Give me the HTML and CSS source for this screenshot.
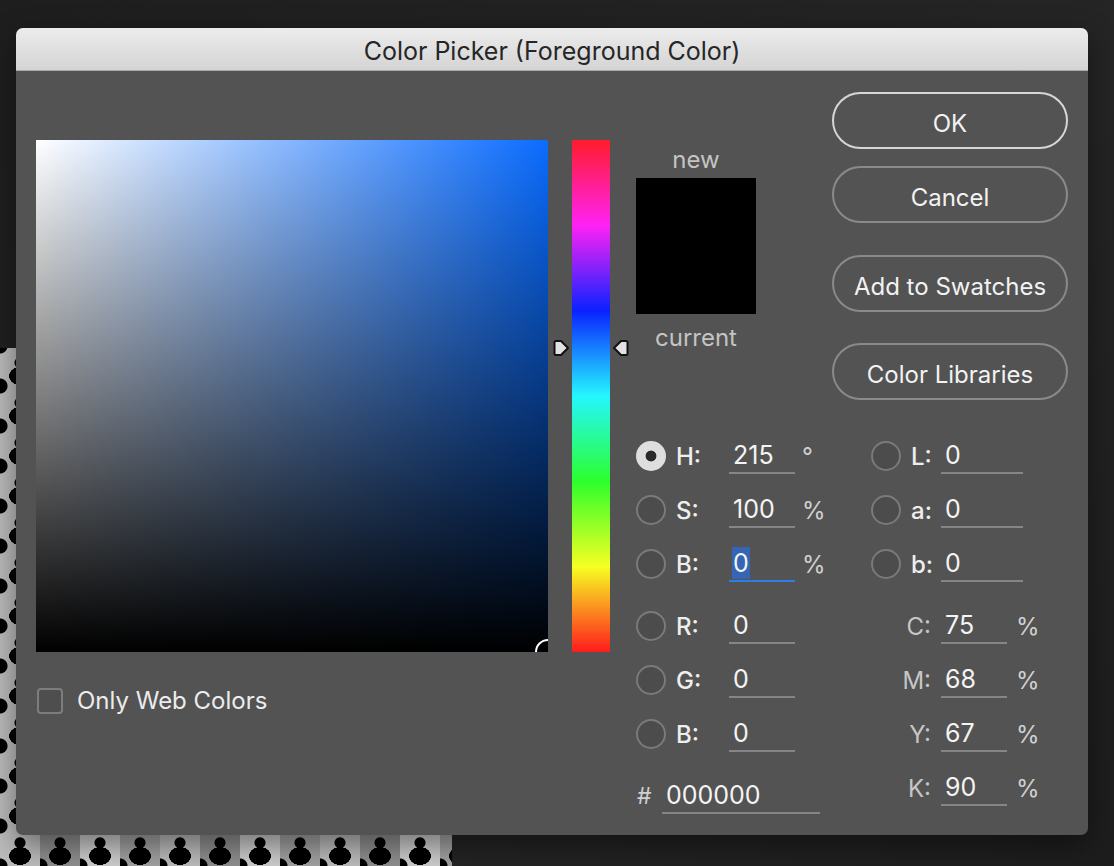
FILE: index.html
```html
<!DOCTYPE html>
<html>
<head>
<meta charset="utf-8">
<title>Color Picker</title>
<link rel="stylesheet" href="styles.css">
</head>
<body>
<div class="desktop-pattern"></div>
<div class="window">
  <div class="titlebar">Color Picker (Foreground Color)</div>
  <div class="content">
    <div class="col-field">
      <div class="field"><span class="field-ring"></span></div>
      <div class="webonly"><span class="checkbox"></span><span>Only Web Colors</span></div>
    </div>
    <div class="hue">
      <div class="hue-bar"></div>
      <svg class="arrow arrow-left" width="18" height="18" viewBox="0 0 18 18"><path d="M2.5 3.5 Q2.5 2 4 2 L9 2 L16 9 L9 16 L4 16 Q2.5 16 2.5 14.5 Z" fill="#e2e2e2" stroke="#111" stroke-width="2" stroke-linejoin="round"/></svg>
      <svg class="arrow arrow-right" width="18" height="18" viewBox="0 0 18 18"><path d="M15.5 3.5 Q15.5 2 14 2 L9 2 L2 9 L9 16 L14 16 Q15.5 16 15.5 14.5 Z" fill="#e2e2e2" stroke="#111" stroke-width="2" stroke-linejoin="round"/></svg>
    </div>
    <div class="right">
      <div class="top">
        <div class="preview">
          <div class="plabel">new</div>
          <div class="swatch"></div>
          <div class="plabel current">current</div>
        </div>
        <div class="buttons">
          <div class="btn btn-ok">OK</div>
          <div class="btn btn-cancel">Cancel</div>
          <div class="btn btn-add">Add to Swatches</div>
          <div class="btn btn-lib">Color Libraries</div>
        </div>
      </div>
      <div class="fields">
        <div class="fcol fcol-left">
          <div class="row"><span class="radio on"></span><span class="lbl">H:</span><span class="inp">215</span><span class="unit">°</span></div>
          <div class="row"><span class="radio"></span><span class="lbl">S:</span><span class="inp">100</span><span class="unit">%</span></div>
          <div class="row"><span class="radio"></span><span class="lbl">B:</span><span class="inp active"><span class="sel">0</span></span><span class="unit">%</span></div>
          <div class="row gap"><span class="radio"></span><span class="lbl">R:</span><span class="inp">0</span></div>
          <div class="row"><span class="radio"></span><span class="lbl">G:</span><span class="inp">0</span></div>
          <div class="row"><span class="radio"></span><span class="lbl">B:</span><span class="inp">0</span></div>
          <div class="row gap"><span class="hash">#</span><span class="inp hex">000000</span></div>
        </div>
        <div class="fcol fcol-right">
          <div class="row"><span class="radio"></span><span class="lbl2">L:</span><span class="inp wide">0</span></div>
          <div class="row"><span class="radio"></span><span class="lbl2">a:</span><span class="inp wide">0</span></div>
          <div class="row"><span class="radio"></span><span class="lbl2">b:</span><span class="inp wide">0</span></div>
          <div class="row gap"><span class="lbl3">C:</span><span class="inp">75</span><span class="unit u2">%</span></div>
          <div class="row"><span class="lbl3">M:</span><span class="inp">68</span><span class="unit u2">%</span></div>
          <div class="row"><span class="lbl3">Y:</span><span class="inp">67</span><span class="unit u2">%</span></div>
          <div class="row"><span class="lbl3">K:</span><span class="inp">90</span><span class="unit u2">%</span></div>
        </div>
      </div>
    </div>
  </div>
</div>
</body>
</html>
```

FILE: styles.css
```css
html, body {
  margin: 0;
  padding: 0;
}
body {
  width: 1114px;
  height: 866px;
  overflow: hidden;
  position: relative;
  background: linear-gradient(135deg, #1e1e1e 0%, #252525 60%, #1d1d1d 100%);
  font-family: "Inter", "Liberation Sans", sans-serif;
  padding: 28px 0 0 16px;
  box-sizing: border-box;
}
.desktop-pattern {
  position: absolute;
  left: 0;
  top: 348px;
  width: 452px;
  height: 518px;
  background-color: #a9a9a9;
  background-image:
    radial-gradient(ellipse 11px 9px at 50% 55%, #000 0 98%, transparent 100%),
    radial-gradient(circle at 50% 22%, #000 0 5px, transparent 6px),
    radial-gradient(circle at 0% 80%, #000 0 7px, transparent 8px),
    repeating-linear-gradient(90deg, #bcbcbc 0 40px, #8f8f8f 40px 80px, #cdcdcd 80px 120px, #a2a2a2 120px 160px),
    repeating-linear-gradient(180deg, rgba(255,255,255,0.15) 0 40px, rgba(0,0,0,0.12) 40px 80px);
  background-size: 40px 40px, 40px 40px, 40px 40px, auto, auto;
  background-position: 0 6px, 0 6px, 0 6px, 0 0, 0 0;
}
.window {
  position: relative;
  width: 1072px;
  height: 807px;
  background: #535353;
  border-radius: 7px;
  box-shadow: 0 10px 30px rgba(0,0,0,0.45);
  overflow: hidden;
}
.titlebar {
  height: 42px;
  border-bottom: 1px solid #a9a9a9;
  background: linear-gradient(#ececec, #d4d4d4);
  color: #262626;
  font-size: 25px;
  line-height: 46px;
  text-align: center;
}
.content {
  display: flex;
  padding: 0 0 0 20px;
}
.col-field {
  display: flex;
  flex-direction: column;
  margin-top: 69px;
}
.field {
  position: relative;
  width: 512px;
  height: 512px;
  overflow: hidden;
  background:
    linear-gradient(to top, #000, rgba(0,0,0,0)),
    linear-gradient(to right, #fff, #0a6cff);
}
.field-ring {
  position: absolute;
  right: -13px;
  bottom: -13px;
  width: 22px;
  height: 22px;
  border: 2px solid #fff;
  border-radius: 50%;
}
.webonly {
  display: flex;
  align-items: center;
  margin-top: 34px;
  margin-left: 1px;
  color: #ececec;
  font-size: 24px;
}
.checkbox {
  width: 22px;
  height: 22px;
  border: 2px solid #7d7d7d;
  border-radius: 4px;
  background: #4e4e4e;
  margin-right: 14px;
}
.hue {
  position: relative;
  margin-left: 24px;
  margin-top: 69px;
  width: 38px;
  height: 512px;
}
.hue-bar {
  width: 38px;
  height: 512px;
  background: linear-gradient(to bottom,
    #ff1c2a 0%, #ff22f4 16.67%, #0a22ff 33.33%, #25f6ff 50%, #2cff2c 66.67%, #f7ff22 83.33%, #ff1c1c 100%);
}
.arrow {
  position: absolute;
  top: 199px;
}
.arrow-left { left: -20px; }
.arrow-right { left: 40px; }
.right {
  margin-left: 26px;
  width: 432px;
  padding-top: 21px;
  display: flex;
  flex-direction: column;
}
.top {
  display: flex;
  justify-content: space-between;
}
.preview {
  width: 120px;
  margin-top: 54px;
  display: flex;
  flex-direction: column;
  align-items: center;
}
.plabel {
  color: #c4c4c4;
  font-size: 24px;
  line-height: 28px;
}
.swatch {
  width: 120px;
  height: 136px;
  background: #000;
  margin-top: 4px;
}
.plabel.current {
  margin-top: 10px;
}
.buttons {
  width: 236px;
  display: flex;
  flex-direction: column;
}
.btn {
  height: 47px;
  padding-top: 6px;
  border: 2px solid #8a8a8a;
  border-radius: 30px;
  color: #f2f2f2;
  font-size: 24px;
  line-height: 48px;
  text-align: center;
}
.btn-ok { border-color: #d6d6d6; }
.btn-cancel { margin-top: 17px; }
.btn-add { margin-top: 32px; }
.btn-lib { margin-top: 31px; }
.fields {
  display: flex;
  margin-top: 29px;
}
.fcol {
  display: flex;
  flex-direction: column;
}
.fcol-left { width: 235px; }
.row {
  height: 54px;
  display: flex;
  align-items: center;
}
.row.gap { margin-top: 8px; }
.radio {
  width: 26px;
  height: 26px;
  border: 2px solid #7a7a7a;
  border-radius: 50%;
  background: #4c4c4c;
  margin-right: 10px;
  box-sizing: content-box;
  flex: none;
}
.radio.on {
  width: 30px;
  height: 30px;
  border: none;
  background: radial-gradient(circle, #2a2a2a 0 5px, #dedede 5.8px);
}
.lbl {
  width: 53px;
  color: #eeeeee;
  font-size: 24px;
  font-weight: 500;
}
.lbl2 {
  width: 30px;
  color: #eeeeee;
  font-size: 24px;
  font-weight: 500;
}
.lbl3 {
  width: 60px;
  padding-right: 10px;
  text-align: right;
  color: #c6c6c6;
  font-size: 24px;
}
.inp {
  width: 62px;
  height: 34px;
  padding-left: 4px;
  border-bottom: 2px solid #858585;
  color: #f4f4f4;
  font-size: 25px;
  line-height: 34px;
  display: flex;
  align-items: center;
}
.inp.wide { width: 78px; }
.inp.hex { width: 154px; margin-left: 10px; }
.inp.active { border-bottom-color: #2f7ee8; }
.sel {
  background: #3565b5;
  line-height: 32px;
  padding: 0 1px;
  margin-left: -1px;
}
.unit {
  margin-left: 7px;
  color: #d0d0d0;
  font-size: 24px;
}
.unit.u2 { margin-left: 9px; }
.hash {
  width: 15px;
  margin-left: 1px;
  color: #d0d0d0;
  font-size: 23px;
}
```
